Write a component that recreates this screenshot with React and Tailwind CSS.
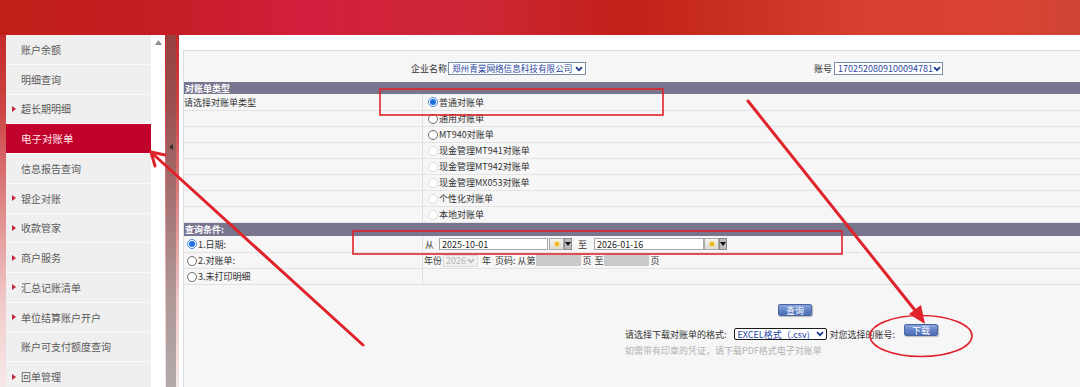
import React from "react";

const menu = [
  { t: "账户余额", a: false },
  { t: "明细查询", a: false },
  { t: "超长期明细", a: true },
  { t: "电子对账单", a: false, sel: true },
  { t: "信息报告查询", a: false },
  { t: "银企对账", a: true },
  { t: "收款管家", a: true },
  { t: "商户服务", a: true },
  { t: "汇总记账清单", a: true },
  { t: "单位结算账户开户", a: true },
  { t: "账户可支付额度查询", a: false },
  { t: "回单管理", a: true },
];

const types = [
  { t: "普通对账单", c: true },
  { t: "通用对账单" },
  { t: "MT940对账单" },
  { t: "现金管理MT941对账单", d: true },
  { t: "现金管理MT942对账单", d: true },
  { t: "现金管理MX053对账单", d: true },
  { t: "个性化对账单", d: true },
  { t: "本地对账单", d: true },
];

function Radio({ checked, disabled }) {
  if (checked) {
    return (
      <span className="w-[10px] h-[10px] shrink-0 rounded-full border border-[#4a8ae6] bg-white flex items-center justify-center">
        <span className="w-[6px] h-[6px] rounded-full bg-[#1f6fe0]" />
      </span>
    );
  }
  if (disabled) {
    return <span className="w-[10px] h-[10px] shrink-0 rounded-full border border-[#dcdcdc] bg-white" />;
  }
  return <span className="w-[10px] h-[10px] shrink-0 rounded-full border border-[#6e6e6e] bg-white" />;
}

function Chevron({ color = "#1c3a8a" }) {
  return (
    <svg width="8" height="6" viewBox="0 0 8 6" className="shrink-0">
      <path d="M1 1.2 L4 4.2 L7 1.2" fill="none" stroke={color} strokeWidth="1.8" />
    </svg>
  );
}

function CalBtn() {
  return (
    <span className="flex items-center">
      <span className="w-[15px] h-[12px] border border-[#a9a9a9] bg-[linear-gradient(180deg,#f4f4f4,#dcdcdc)] flex items-center justify-center">
        <span className="w-[4px] h-[4px] rounded-full bg-[#f0b020] shadow-[0_0_2px_1px_#f8d870]" />
      </span>
      <span className="w-[8px] h-[12px] bg-[#bdbdbd] border border-[#8a8a8a] flex items-center justify-center">
        <svg width="6" height="4" viewBox="0 0 6 4">
          <path d="M0 0 L6 0 L3 4 Z" fill="#111" />
        </svg>
      </span>
    </span>
  );
}

function Btn({ children }) {
  return (
    <span className="inline-flex items-center justify-center h-[12px] px-[7px] rounded-[2px] border border-[#4a64a0] bg-[linear-gradient(180deg,#8aa6e0_0%,#6283c8_50%,#4d6db4_100%)] text-white text-[9px] leading-none shadow-[1px_1px_1px_rgba(0,0,0,0.25)]">
      {children}
    </span>
  );
}

export default function App() {
  return (
    <div className="relative w-[1080px] h-[387px] overflow-hidden font-['Noto_Sans_CJK_SC','Noto_Sans',sans-serif] bg-[linear-gradient(180deg,#c42424_0px,#c72b2b_40px,#cd4444_110px,#e08a8a_210px,#f0c8c8_300px,#f7e8e8_387px)]">
      {/* header */}
      <div className="h-[35px] bg-[linear-gradient(90deg,#bf1f18_0%,#c41d22_14%,#d21f3e_28%,#cd2736_44%,#c22019_58%,#c9301f_68%,#d83f2f_80%,#da4231_92%,#cf4536_100%)]" />

      <div className="flex h-[352px] pl-[6px]">
        {/* sidebar */}
        <aside className="w-[159px] bg-white flex">
          <ul className="w-[145px] flex flex-col">
            {menu.map((m) =>
              m.sel ? (
                <li
                  key={m.t}
                  className="h-[29.75px] shrink-0 bg-[#c1002b] border-b border-white flex items-center pl-[15px] text-[10.5px] text-[#ffe6ea]"
                >
                  {m.t}
                </li>
              ) : (
                <li
                  key={m.t}
                  className="h-[29.75px] shrink-0 bg-[#efefef] border-b border-[#f9f9f9] flex items-center pl-[6px] text-[10px] text-[#5a5a5a]"
                >
                  <span className="w-[9px] flex items-center">
                    {m.a && (
                      <svg width="4" height="6" viewBox="0 0 4 6">
                        <path d="M0 0 L4 3 L0 6 Z" fill="#c2283a" />
                      </svg>
                    )}
                  </span>
                  {m.t}
                </li>
              )
            )}
          </ul>
          <div className="w-[14px] flex justify-center pt-[5px]">
            <svg width="7" height="5" viewBox="0 0 7 5">
              <path d="M0 5 L3.5 0 L7 5 Z" fill="#8c8c8c" />
            </svg>
          </div>
        </aside>

        {/* divider */}
        <div className="w-[14px] pl-[1px]">
          <div className="w-[10px] h-full flex flex-col items-center pt-[109px] bg-[radial-gradient(circle,rgba(95,95,95,0.7)_0.6px,transparent_0.9px)] bg-[length:2px_2px]">
            <svg width="4" height="6" viewBox="0 0 4 6">
              <path d="M4 0 L0 3 L4 6 Z" fill="#333" />
            </svg>
          </div>
        </div>

        {/* main */}
        <main className="flex-1 bg-white pl-[4px] pt-[15px]">
          <div className="h-full bg-[#f6f6f6] border-l border-t border-[#dedede] text-[9px] text-[#333] leading-none">
            {/* company row */}
            <div className="h-[31px] pt-[4px] flex items-center pl-[227px] whitespace-nowrap">
              <span>企业名称</span>
              <span className="ml-[1px] w-[138px] h-[13px] border border-[#7d8cab] bg-white flex items-center justify-between pl-[3px] pr-[2px] text-[#2a48a0] overflow-hidden">
                <span className="text-[8.6px]">郑州青棠网络信息科技有限公司</span>
                <Chevron />
              </span>
              <span className="ml-[228px]">账号</span>
              <span className="ml-[2px] w-[109px] h-[13px] border border-[#7d8cab] bg-white flex items-center justify-between pl-[3px] pr-[2px] text-[#2a48a0] overflow-hidden">
                <span>1702520809100094781</span>
                <Chevron />
              </span>
            </div>

            {/* type header */}
            <div className="h-[12px] bg-[#78758f] text-white font-bold flex items-center pl-[1px]">对账单类型</div>
            {types.map((r, i) => (
              <div
                key={r.t}
                className={`${i === 0 ? "h-[17px]" : "h-[16px]"} grid grid-cols-[238px_1fr] border-b border-[#e3e3e3]`}
              >
                <div className="flex items-center">{i === 0 ? "请选择对账单类型" : ""}</div>
                <div className="border-l border-[#e0e0e0] flex items-center gap-[1px] pl-[5px]">
                  <Radio checked={r.c} disabled={r.d} />
                  <span>{r.t}</span>
                </div>
              </div>
            ))}

            {/* query header */}
            <div className="h-[13px] bg-[#78758f] text-white font-bold flex items-center pl-[1px]">查询条件:</div>

            <div className="h-[17px] grid grid-cols-[238px_1fr] border-b border-[#e3e3e3]">
              <div className="flex items-center gap-[1px] pl-[3px]">
                <Radio checked />
                <span>1.日期:</span>
              </div>
              <div className="border-l border-[#e0e0e0] flex items-center pl-[2px]">
                <span>从</span>
                <span className="ml-[5px] w-[109px] h-[12px] border border-[#a8a8a8] bg-white flex items-center pl-[2px] text-[#222]">2025-10-01</span>
                <span className="ml-[1px]"><CalBtn /></span>
                <span className="ml-[6px]">至</span>
                <span className="ml-[7px] w-[110px] h-[12px] border border-[#a8a8a8] bg-white flex items-center pl-[2px] text-[#222]">2026-01-16</span>
                <CalBtn />
              </div>
            </div>

            <div className="h-[16px] grid grid-cols-[238px_1fr] border-b border-[#e3e3e3]">
              <div className="flex items-center gap-[1px] pl-[3px]">
                <Radio />
                <span>2.对账单:</span>
              </div>
              <div className="border-l border-[#e0e0e0] flex items-center pl-[1px]">
                <span>年份</span>
                <span className="ml-[1px] w-[35px] h-[12px] border border-[#dcdcdc] bg-[#f0f0f0] flex items-center justify-between pl-[2px] pr-[2px] text-[#b8b8b8]">
                  <span>2026</span>
                  <Chevron color="#bbbbbb" />
                </span>
                <span className="ml-[4px]">年</span>
                <span className="ml-[4px]">页码:</span>
                <span className="ml-[2px]">从第</span>
                <span className="w-[45px] h-[11px] bg-[#c9c9c9]" />
                <span className="ml-[2px]">页</span>
                <span className="ml-[3px]">至</span>
                <span className="w-[45px] h-[11px] bg-[#c9c9c9]" />
                <span className="ml-[2px]">页</span>
              </div>
            </div>

            <div className="h-[16px] grid grid-cols-[238px_1fr] border-b border-[#e3e3e3]">
              <div className="flex items-center gap-[1px] pl-[3px]">
                <Radio />
                <span>3.未打印明细</span>
              </div>
              <div className="border-l border-[#e0e0e0]" />
            </div>

            {/* actions */}
            <div className="mt-[19px] pl-[594px] flex">
              <Btn>查询</Btn>
            </div>
            <div className="mt-[10px] pl-[441px] flex items-center h-[16px] whitespace-nowrap">
              <span>请选择下载对账单的格式:</span>
              <span className="ml-[7px] w-[93px] h-[12px] border-[1.5px] border-[#1a1a1a] rounded-[2px] bg-white flex items-center justify-between pl-[3px] pr-[2px] text-[#2040a8]">
                <span>EXCEL格式（.csv)</span>
                <Chevron />
              </span>
              <span className="ml-[3px]">对您选择的账号:</span>
              <span className="ml-[9px] mb-[8px] flex">
                <Btn>下载</Btn>
              </span>
            </div>
            <div className="mt-[4px] pl-[441px] text-[#b2b2b2] whitespace-nowrap">如需带有印章的凭证，请下载PDF格式电子对账单</div>
          </div>
        </main>
      </div>

      {/* annotations */}
      <svg className="absolute inset-0 pointer-events-none" width="1080" height="387" viewBox="0 0 1080 387">
        <rect x="380" y="89" width="283" height="26" fill="none" stroke="#e0222a" strokeWidth="1.6" />
        <rect x="353" y="231" width="489" height="23" fill="none" stroke="#e0222a" strokeWidth="1.6" />
        <ellipse cx="921" cy="336" rx="51" ry="20.5" fill="none" stroke="#e0222a" strokeWidth="1.6" />
        <line x1="363" y1="345" x2="153" y2="154" stroke="#e0222a" strokeWidth="3" strokeLinecap="round" />
        <polyline points="165,155 151,152 155,166" fill="none" stroke="#e0222a" strokeWidth="3" strokeLinecap="round" strokeLinejoin="round" />
        <line x1="748" y1="101" x2="918" y2="314" stroke="#e0222a" strokeWidth="3" strokeLinecap="round" />
        <polygon points="925,324 909,314 921,305" fill="#e0222a" />
      </svg>
    </div>
  );
}
